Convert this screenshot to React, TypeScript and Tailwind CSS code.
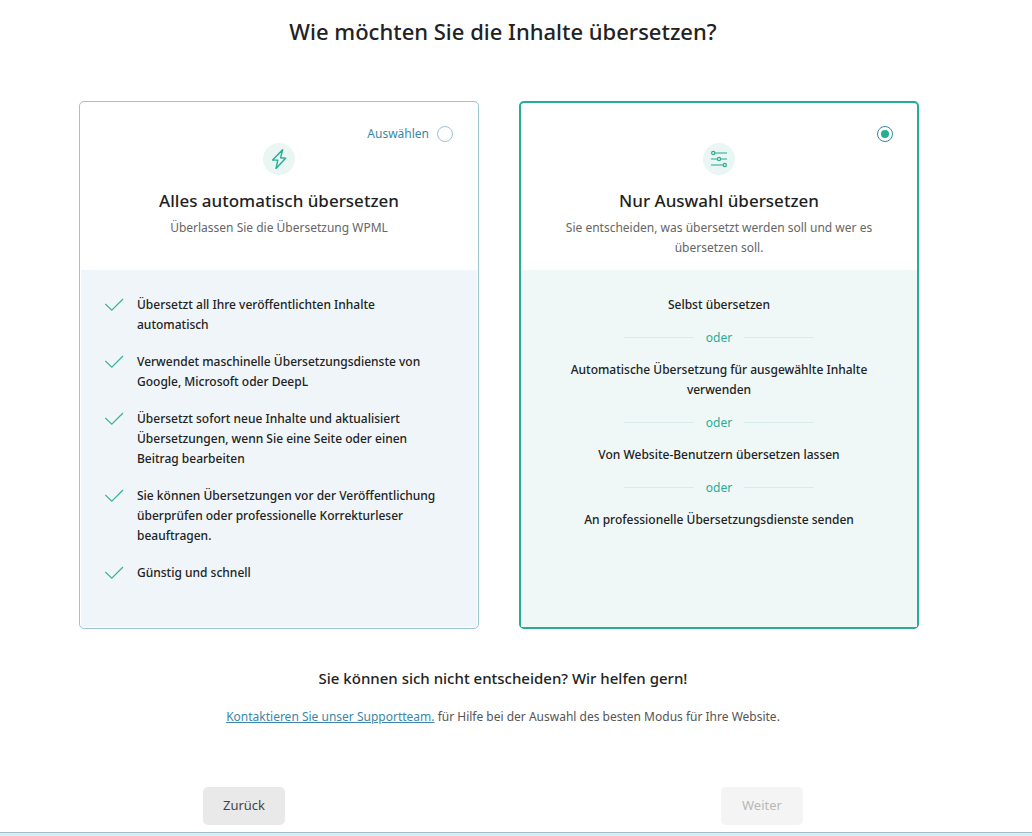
import { useState } from 'react';
import type { ReactNode } from 'react';
import clsx from 'clsx';

type Mode = 'auto' | 'manual';

const benefits = [
  'Übersetzt all Ihre veröffentlichten Inhalte automatisch',
  'Verwendet maschinelle Übersetzungsdienste von Google, Microsoft oder DeepL',
  'Übersetzt sofort neue Inhalte und aktualisiert Übersetzungen, wenn Sie eine Seite oder einen Beitrag bearbeiten',
  'Sie können Übersetzungen vor der Veröffentlichung überprüfen oder professionelle Korrekturleser beauftragen.',
  'Günstig und schnell',
];

const options = [
  'Selbst übersetzen',
  'Automatische Übersetzung für ausgewählte Inhalte verwenden',
  'Von Website-Benutzern übersetzen lassen',
  'An professionelle Übersetzungsdienste senden',
];

function BoltIcon() {
  return (
    <svg viewBox="0 0 32 32" className="h-8 w-8" fill="none" stroke="#27ad95" strokeWidth="1.4" strokeLinejoin="round" aria-hidden="true">
      <path d="M19.6 6.7 9.6 17.1h5.2L13 25.4l9.6-10.2-5-.4z" />
    </svg>
  );
}

function SlidersIcon() {
  return (
    <svg viewBox="0 0 32 32" className="h-8 w-8" fill="none" stroke="#27ad95" aria-hidden="true">
      <path d="M12 10h12M8 16h6M18 16h6M8 22h12" strokeOpacity="0.7" strokeWidth="1.3" />
      <circle cx="10.2" cy="10" r="1.6" strokeWidth="1.2" />
      <circle cx="16" cy="16" r="1.6" strokeWidth="1.2" />
      <circle cx="21.8" cy="22" r="1.6" strokeWidth="1.2" />
    </svg>
  );
}

function CheckIcon() {
  return (
    <svg viewBox="0 0 20 20" className="h-5 w-5 shrink-0" fill="none" stroke="#35b29d" strokeWidth="1.2" aria-hidden="true">
      <path d="M.3 9 6.8 15.2 18 4" />
    </svg>
  );
}

interface ModeCardProps {
  mode: Mode;
  title: string;
  description: string;
  icon: ReactNode;
  selected: boolean;
  onSelect: (mode: Mode) => void;
  children: ReactNode;
}

function ModeCard({ mode, title, description, icon, selected, onSelect, children }: ModeCardProps) {
  return (
    <section
      className={clsx(
        'flex w-full max-w-[400px] flex-col rounded-[5px]',
        selected ? 'border-2 border-[#27ad95]' : 'border border-[#9cc5cf] p-px',
      )}
    >
      <div className="flex min-h-[167px] flex-col items-center px-6 pt-[22px] text-center">
        <label className="flex h-[18px] cursor-pointer items-center gap-2 self-end text-xs text-[#3b87a5]">
          {!selected && <span>Auswählen</span>}
          <input
            type="radio"
            name="mode"
            value={mode}
            aria-label={title}
            checked={selected}
            onChange={() => onSelect(mode)}
            className="h-4 w-4 appearance-none rounded-full border border-[#9cc5cf] bg-white bg-clip-content p-[3px] checked:border-[#3b87a5] checked:bg-[#27ad95]"
          />
        </label>
        <span className="rounded-full bg-[#e9f6f4]">{icon}</span>
        <h2 className="mt-3 text-[17px] leading-7 font-medium text-[#1f1f1f]">{title}</h2>
        <p className="mt-[3px] max-w-[320px] text-xs leading-5 text-[#666]">{description}</p>
      </div>
      <div className={clsx('grow px-6 pt-[25px] pb-11', selected ? 'bg-[#eff8f7]' : 'bg-[#eff5f8]')}>{children}</div>
    </section>
  );
}

export default function App() {
  const [mode, setMode] = useState<Mode>('manual');

  return (
    <div className="bg-white font-['Noto_Sans',sans-serif] text-[#222]">
      <main className="pr-[26px]">
        <h1 className="pt-[15px] text-center text-[22px] leading-8 font-medium">Wie möchten Sie die Inhalte übersetzen?</h1>

        <div className="mt-[54px] flex justify-center gap-10 pr-2">
          <ModeCard
            mode="auto"
            title="Alles automatisch übersetzen"
            description="Überlassen Sie die Übersetzung WPML"
            icon={<BoltIcon />}
            selected={mode === 'auto'}
            onSelect={setMode}
          >
            <ul className="flex flex-col gap-[17px] pr-2">
              {benefits.map((benefit) => (
                <li key={benefit} className="flex gap-3 text-xs leading-5 font-medium">
                  <CheckIcon />
                  {benefit}
                </li>
              ))}
            </ul>
          </ModeCard>

          <ModeCard
            mode="manual"
            title="Nur Auswahl übersetzen"
            description="Sie entscheiden, was übersetzt werden soll und wer es übersetzen soll."
            icon={<SlidersIcon />}
            selected={mode === 'manual'}
            onSelect={setMode}
          >
            <ul className="flex flex-col gap-3 text-center text-xs leading-5 font-medium">
              {options.map((option, idx) => (
                <li key={option} className="flex flex-col items-center gap-3">
                  {idx > 0 && (
                    <span className="flex items-center gap-3 leading-[21px] font-normal text-[#27ad95]">
                      <span className="h-px w-[70px] bg-[#d5eeea]" />
                      oder
                      <span className="h-px w-[70px] bg-[#d5eeea]" />
                    </span>
                  )}
                  <span className="max-w-[320px]">{option}</span>
                </li>
              ))}
            </ul>
          </ModeCard>
        </div>

        <div className="mt-[39px] text-center">
          <h3 className="text-[15px] leading-5 font-medium">Sie können sich nicht entscheiden? Wir helfen gern!</h3>
          <p className="mt-[19px] text-xs leading-5 text-[#555]">
            <a href="#support" className="text-[#3b87a5] underline">
              Kontaktieren Sie unser Supportteam.
            </a>{' '}
            für Hilfe bei der Auswahl des besten Modus für Ihre Website.
          </p>
        </div>

        <div className="mx-auto mt-[60px] flex max-w-[600px] justify-between text-[13px]">
          <button type="button" className="h-[38px] w-[82px] rounded-[5px] bg-[#e9e9e9] text-[#444]">
            Zurück
          </button>
          <button type="button" disabled className="h-[38px] w-[82px] rounded-[5px] bg-[#f4f4f4] text-[#b8b8b8]">
            Weiter
          </button>
        </div>
      </main>
      <footer className="mt-[7px] h-1 border-t border-[#9fbfc4] bg-[#d3eff4]" />
    </div>
  );
}
